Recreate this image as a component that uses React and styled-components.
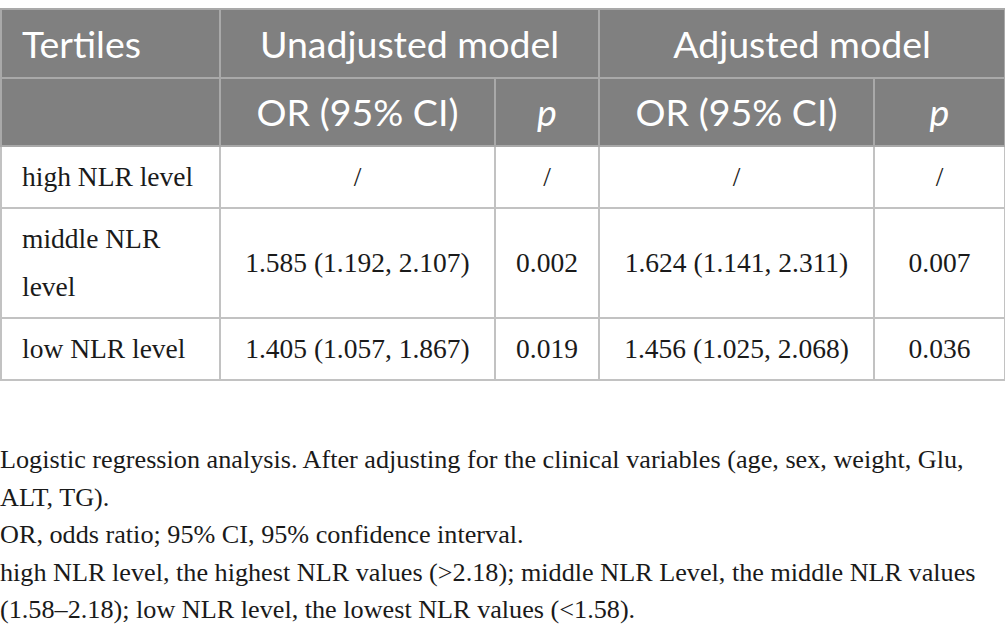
import React from "react";
import styled, { createGlobalStyle } from "styled-components";

const Global = createGlobalStyle`
  html, body { margin: 0; padding: 0; background: #fff; }
  body { width: 1005px; }
`;

const Page = styled.div`
  padding-top: 8px;
  width: 1005px;
`;

const Table = styled.table`
  border-collapse: collapse;
  table-layout: fixed;
  width: 1004px;
  border: 2px solid #bdbdbd;
`;

const HeadCell = styled.th`
  background: #808080;
  color: #fff;
  font-family: Lato, "Open Sans", sans-serif;
  font-weight: 400;
  font-size: 37.5px;
  line-height: 44px;
  height: ${(p) => p.$h}px;
  padding: 0 20px;
  text-align: ${(p) => (p.$left ? "left" : "center")};
  border: 2px solid #a9a9a9;
  font-style: ${(p) => (p.$italic ? "italic" : "normal")};
  box-sizing: border-box;
  vertical-align: middle;
  white-space: nowrap;
`;

const Cell = styled.td`
  font-family: "Liberation Serif", "Times New Roman", serif;
  font-size: 27.5px;
  line-height: 48px;
  color: #1a1a1a;
  padding: 6px 20px;
  text-align: ${(p) => (p.$left ? "left" : "center")};
  border: 2px solid #c2c2c2;
  vertical-align: middle;
`;

const Notes = styled.div`
  margin-top: 60px;
  font-family: "Liberation Serif", "Times New Roman", serif;
  font-size: 26.2px;
  line-height: 37.5px;
  color: #1a1a1a;
  width: 1000px;
`;

const Note = styled.p`
  margin: 0;
`;

const rows = [
  ["high NLR level", "/", "/", "/", "/"],
  ["middle NLR level", "1.585 (1.192, 2.107)", "0.002", "1.624 (1.141, 2.311)", "0.007"],
  ["low NLR level", "1.405 (1.057, 1.867)", "0.019", "1.456 (1.025, 2.068)", "0.036"],
];

export default function App() {
  return (
    <Page>
      <Global />
      <Table>
        <colgroup>
          <col style={{ width: 219 }} />
          <col style={{ width: 275 }} />
          <col style={{ width: 104 }} />
          <col style={{ width: 275 }} />
          <col style={{ width: 131 }} />
        </colgroup>
        <thead>
          <tr>
            <HeadCell $left $h={69}>Tertiles</HeadCell>
            <HeadCell colSpan={2} $h={69}>Unadjusted model</HeadCell>
            <HeadCell colSpan={2} $h={69}>Adjusted model</HeadCell>
          </tr>
          <tr>
            <HeadCell $h={68}></HeadCell>
            <HeadCell $h={68}>OR (95% CI)</HeadCell>
            <HeadCell $h={68} $italic>p</HeadCell>
            <HeadCell $h={68}>OR (95% CI)</HeadCell>
            <HeadCell $h={68} $italic>p</HeadCell>
          </tr>
        </thead>
        <tbody>
          {rows.map((r) => (
            <tr key={r[0]}>
              {r.map((c, i) => (
                <Cell key={i} $left={i === 0}>{c}</Cell>
              ))}
            </tr>
          ))}
        </tbody>
      </Table>
      <Notes>
        <Note>Logistic regression analysis. After adjusting for the clinical variables (age, sex, weight, Glu, ALT, TG).</Note>
        <Note>OR, odds ratio; 95% CI, 95% confidence interval.</Note>
        <Note>high NLR level, the highest NLR values (&gt;2.18); middle NLR Level, the middle NLR values (1.58–2.18); low NLR level, the lowest NLR values (&lt;1.58).</Note>
      </Notes>
    </Page>
  );
}
